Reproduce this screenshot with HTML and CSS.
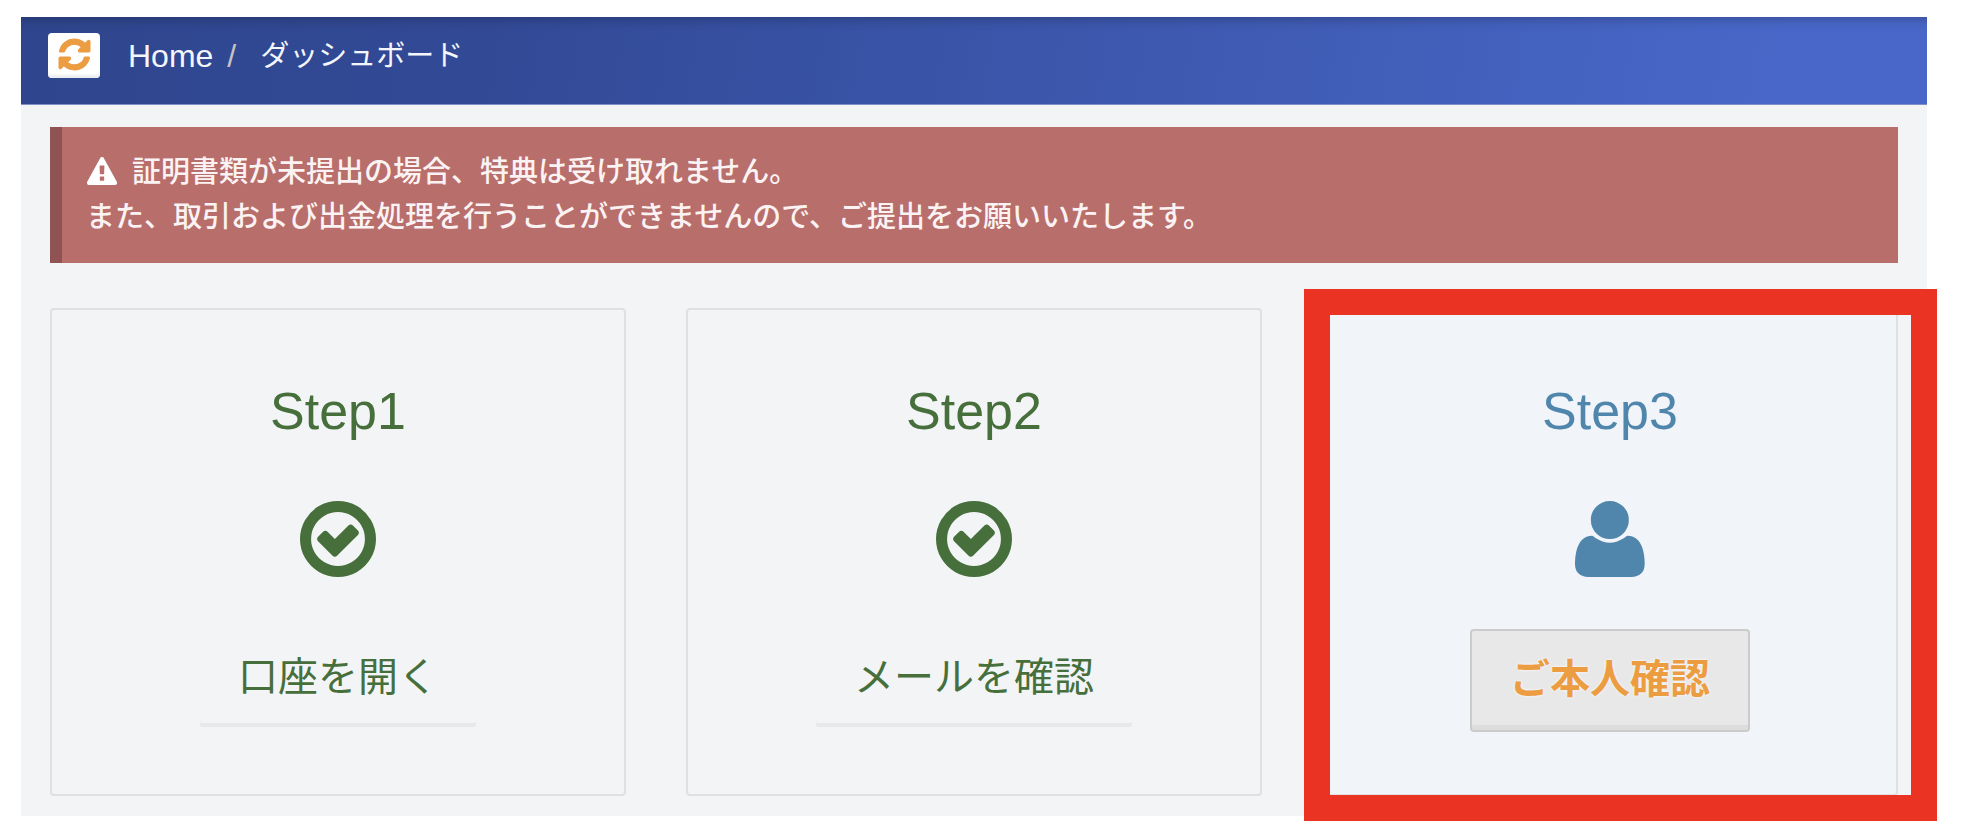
FILE: index.html
```html
<!DOCTYPE html>
<html lang="ja">
  <head>
    <meta charset="UTF-8" />
    <meta name="viewport" content="width=device-width, initial-scale=1.0" />
    <title>ダッシュボード</title>
    <link rel="stylesheet" href="styles.css">
  </head>
  <body>
    <div class="panel">
      <header class="topbar">
        <button type="button" class="refresh" aria-label="更新">
          <svg viewBox="0 -1408 1536 1536" aria-hidden="true">
            <path transform="scale(1,-1)" d="M1511 480q0 -5 -1 -7q-64 -268 -268 -434.5t-478 -166.5q-146 0 -282.5 55t-243.5 157l-129 -129q-19 -19 -45 -19t-45 19t-19 45v448q0 26 19 45t45 19h448q26 0 45 -19t19 -45t-19 -45l-137 -137q71 -66 161 -102t187 -36q134 0 250 65t186 179q11 17 53 117q8 23 30 23h192q13 0 22.5 -9.5t9.5 -22.5zM1536 1280v-448q0 -26 -19 -45t-45 -19h-448q-26 0 -45 19t-19 45t19 45l138 138q-148 137 -349 137q-134 0 -250 -65t-186 -179q-11 -17 -53 -117q-8 -23 -30 -23h-199q-13 0 -22.5 9.5t-9.5 22.5v7q65 268 270 434.5t480 166.5q146 0 284 -55.5t245 -156.5l130 129q19 19 45 19t45 -19t19 -45z" />
          </svg>
        </button>
        <nav class="breadcrumb">
          <a href="#">Home</a>
          <span class="separator">/</span>
          <span class="current">ダッシュボード</span>
        </nav>
      </header>

      <main class="content">
        <div class="alert" role="alert">
          <svg class="alert-icon" viewBox="0 -1536 1792 1664" aria-hidden="true">
            <path transform="scale(1,-1)" d="M1024 161v190q0 14 -9.5 23.5t-22.5 9.5h-192q-13 0 -22.5 -9.5t-9.5 -23.5v-190q0 -14 9.5 -23.5t22.5 -9.5h192q13 0 22.5 9.5t9.5 23.5zM1022 535l18 459q0 12 -10 19q-13 11 -24 11h-220q-11 0 -24 -11q-10 -7 -10 -21l17 -457q0 -10 10 -16.5t24 -6.5h185q14 0 23.5 6.5t10.5 16.5zM1008 1469l768 -1408q35 -63 -2 -126q-17 -29 -46.5 -46t-63.5 -17h-1536q-34 0 -63.5 17t-46.5 46q-37 63 -2 126l768 1408q17 31 47 49t65 18t65 -18t47 -49z" />
          </svg>証明書類が未提出の場合、特典は受け取れません。<br />
          また、取引および出金処理を行うことができませんので、ご提出をお願いいたします。
        </div>

        <div class="steps">
          <section class="step done">
            <h2>Step1</h2>
            <svg class="step-icon" viewBox="0 -1408 1536 1536" aria-hidden="true">
              <path transform="scale(1,-1)" d="M1171 723l-422 -422q-19 -19 -45 -19t-45 19l-294 294q-19 19 -19 45t19 45l102 102q19 19 45 19t45 -19l147 -147l275 275q19 19 45 19t45 -19l102 -102q19 -19 19 -45t-19 -45zM1312 640q0 148 -73 273t-198 198t-273 73t-273 -73t-198 -198t-73 -273t73 -273t198 -198t273 -73t273 73t198 198t73 273zM1536 640q0 -209 -103 -385.5t-279.5 -279.5t-385.5 -103t-385.5 103t-279.5 279.5t-103 385.5t103 385.5t279.5 279.5t385.5 103t385.5 -103t279.5 -279.5t103 -385.5z" />
            </svg>
            <button type="button" class="step-button">口座を開く</button>
          </section>

          <section class="step done">
            <h2>Step2</h2>
            <svg class="step-icon" viewBox="0 -1408 1536 1536" aria-hidden="true">
              <path transform="scale(1,-1)" d="M1171 723l-422 -422q-19 -19 -45 -19t-45 19l-294 294q-19 19 -19 45t19 45l102 102q19 19 45 19t45 -19l147 -147l275 275q19 19 45 19t45 -19l102 -102q19 -19 19 -45t-19 -45zM1312 640q0 148 -73 273t-198 198t-273 73t-273 -73t-198 -198t-73 -273t73 -273t198 -198t273 -73t273 73t198 198t73 273zM1536 640q0 -209 -103 -385.5t-279.5 -279.5t-385.5 -103t-385.5 103t-279.5 279.5t-103 385.5t103 385.5t279.5 279.5t385.5 103t385.5 -103t279.5 -279.5t103 -385.5z" />
            </svg>
            <button type="button" class="step-button">メールを確認</button>
          </section>

          <section class="step active">
            <h2>Step3</h2>
            <svg class="step-icon" viewBox="0 -1408 1408 1536" aria-hidden="true">
              <path transform="scale(1,-1)" d="M1408 131q0 -120 -73 -189.5t-194 -69.5h-874q-121 0 -194 69.5t-73 189.5q0 53 3.5 103.5t14 109t26.5 108.5t43 97.5t62 81t85.5 53.5t111.5 20q9 0 42 -21.5t74.5 -48t108 -48t133.5 -21.5t133.5 21.5t108 48t74.5 48t42 21.5q61 0 111.5 -20t85.5 -53.5t62 -81t43 -97.5t26.5 -108.5t14 -109t3.5 -103.5zM1088 1024q0 -159 -112.5 -271.5t-271.5 -112.5t-271.5 112.5t-112.5 271.5t112.5 271.5t271.5 112.5t271.5 -112.5t112.5 -271.5z" />
            </svg>
            <button type="button" class="step-button">ご本人確認</button>
            <div class="highlight"></div>
          </section>
        </div>
      </main>
    </div>
  </body>
</html>
```
FILE: styles.css
```css
* {
  box-sizing: border-box;
}

body {
  margin: 0;
  padding: 17px 45px 22px 21px;
  background: #fff;
  font-family: "Liberation Sans", "Noto Sans CJK JP", sans-serif;
}

.panel {
  background: #f3f4f6;
}

.topbar {
  display: flex;
  align-items: flex-start;
  gap: 28px;
  height: 88px;
  padding: 16px 27px;
  background: linear-gradient(100deg, #2f468e 0%, #324a96 25%, #4867c8 92%);
  box-shadow: inset 0 12px 12px -10px rgba(0, 0, 0, 0.25);
  border-bottom: 1px solid #7f8fc8;
}

.refresh {
  display: flex;
  align-items: center;
  justify-content: center;
  width: 52px;
  height: 45px;
  padding: 0 0 2px;
  border: none;
  border-radius: 4px;
  background: #fff;
  box-shadow: inset 0 -4px 2px -1px #eceef0;
  cursor: pointer;
}

.refresh svg {
  width: 31px;
  height: 31px;
  overflow: visible;
  fill: #ec9c41;
  stroke: #ec9c41;
  stroke-width: 50;
}

.breadcrumb {
  display: flex;
  align-items: center;
  height: 47px;
  color: #f4f6fc;
  font-size: 29px;
  line-height: 45px;
}

.breadcrumb a {
  color: inherit;
  font-size: 32px;
  text-decoration: none;
}

.separator {
  margin: 0 24px 0 14px;
  color: #c4c4c4;
  font-size: 32px;
}

.content {
  padding: 22px 29px 20px;
}

.alert {
  min-height: 136px;
  padding: 20px 24px;
  border-left: 12px solid #8f5353;
  background: #b86e6b;
  color: #fbf3f3;
  font-family: "Noto Sans CJK JP", sans-serif;
  font-size: 29px;
  font-weight: 500;
  line-height: 45px;
}

.alert-icon {
  width: 32px;
  height: 28px;
  margin-right: 14px;
  vertical-align: -3px;
  fill: #fff;
}

.steps {
  display: grid;
  grid-template-columns: repeat(3, 1fr);
  gap: 60px;
  margin-top: 45px;
}

.step {
  position: relative;
  display: flex;
  flex-direction: column;
  align-items: center;
  padding: 71px 20px 62px;
  border: 2px solid #dfe1e1;
  border-radius: 4px;
}

.step h2 {
  margin: 0 0 60px;
  font-size: 52px;
  font-weight: 400;
  line-height: 60px;
}

.step-icon {
  height: 76px;
  margin-bottom: 52px;
  fill: currentColor;
}

.step-button {
  height: 100px;
  padding: 0 38px 10px;
  border: 2px solid transparent;
  border-radius: 4px;
  background: transparent;
  box-shadow: inset 0 -4px 0 #e7e8ea;
  color: inherit;
  font-family: "Noto Sans CJK JP", sans-serif;
  font-size: 40px;
  cursor: pointer;
}

.done {
  color: #466f3c;
}

.active {
  background: #f1f5fa;
  color: #5086ab;
}

.active .step-button {
  height: 103px;
  border-color: #cbcbcb;
  background: #e8e8e8;
  box-shadow: inset 0 -5px 0 #dedcdc;
  color: #ec9c41;
  font-weight: 700;
  text-shadow: 0 0 3px #fff;
}

/* frame drawn around the step that still has to be done */
.highlight {
  position: absolute;
  inset: -21px -41px -27px -20px;
  border: 26px solid #ea3323;
  pointer-events: none;
}
```
